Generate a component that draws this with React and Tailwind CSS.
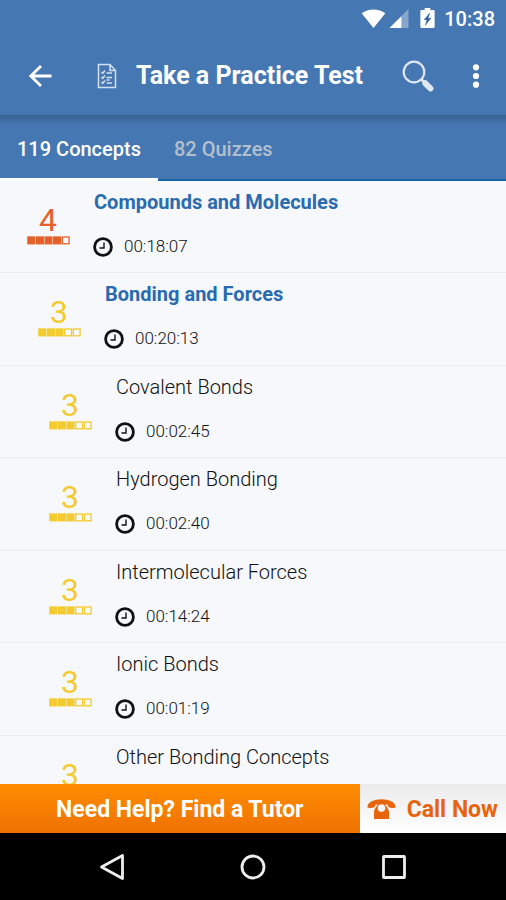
import React, { useState } from 'react';

const concepts = [
  { name: 'Compounds and Molecules', time: '00:18:07', score: 4, level: 0 },
  { name: 'Bonding and Forces', time: '00:20:13', score: 3, level: 1 },
  { name: 'Covalent Bonds', time: '00:02:45', score: 3, level: 2 },
  { name: 'Hydrogen Bonding', time: '00:02:40', score: 3, level: 2 },
  { name: 'Intermolecular Forces', time: '00:14:24', score: 3, level: 2 },
  { name: 'Ionic Bonds', time: '00:01:19', score: 3, level: 2 },
  { name: 'Other Bonding Concepts', score: 3, level: 2 },
];

const indents = ['pl-[26px]', 'pl-[37px]', 'pl-[48px]'];

const StatusBar = () => (
  <div className="flex h-9 items-center justify-end pr-[11px] text-white">
    <svg width="25" height="19" viewBox="0 0 26 20" fill="currentColor">
      <path d="M0.5 4.6C4 2 8.2 0.4 13 0.4s9 1.6 12.500 4.200L13 20z" />
    </svg>
    <svg className="ml-[3px]" width="20" height="19" viewBox="0 0 20 20" fill="currentColor">
      <path d="M20 0v20H0z" opacity="0.35" />
      <path d="M12.500 7.500V20H0z" />
    </svg>
    <svg className="ml-[11px]" width="15" height="20" viewBox="0 0 15 21">
      <path d="M4.500 0h6v2.200h3.300c.7 0 1.200.5 1.200 1.200v16.400c0 .7-.5 1.200-1.200 1.200H1.200C.5 21 0 20.500 0 19.800V3.400c0-.7.5-1.200 1.200-1.200h3.300z" fill="currentColor" />
      <path d="M9.800 5.500L4 12.300h3L5.300 18 11 10.800H8z" fill="#33639c" stroke="#33639c" strokeWidth="0.600" />
    </svg>
    <span className="ml-[9px] pt-0.5 text-xl font-medium">10:38</span>
  </div>
);

const Toolbar = () => (
  <div className="flex h-[79px] items-center pr-6 text-white">
    <button type="button" aria-label="Back" className="ml-7">
      <svg width="24" height="24" viewBox="0 0 24 24" fill="none" stroke="currentColor" strokeWidth="2.800">
        <path d="M23.500 12H3M13 2L2.800 12 13 22" />
      </svg>
    </button>
    <svg className="ml-[45px]" width="20" height="26" viewBox="0 0 20 26" fill="none" stroke="#d5e0ed" strokeWidth="1.500">
      <path d="M1.500 1.500h11.500l5.500 6V24.500h-17zM13 1.500v6h5.500" />
      <path d="M4.500 9l1.200 1.300L8 7.500M4.500 14l1.200 1.300L8 12.500M4.500 19l1.200 1.300L8 17.500M9.500 10h5.500M9.500 14.500h5.500M9.500 17h3M9.500 20h5.500" strokeWidth="1.500" />
    </svg>
    <h1 className="ml-[19px] flex-1 whitespace-nowrap text-[25px] font-bold">Take a Practice Test</h1>
    <button type="button" aria-label="Search">
      <svg width="32" height="32" viewBox="0 0 32 32" fill="none" stroke="#dfe8f3">
        <circle cx="12" cy="12" r="10.300" strokeWidth="2.200" />
        <path d="M19.500 19.500l3 3" strokeWidth="2.500" />
        <path d="M23.300 23.300l5.200 5.200" strokeWidth="6" strokeLinecap="round" />
      </svg>
    </button>
    <button type="button" aria-label="More options" className="ml-9">
      <svg width="12" height="24" viewBox="0 0 12 24" fill="currentColor">
        <circle cx="6" cy="3.300" r="3.100" />
        <circle cx="6" cy="12" r="3.100" />
        <circle cx="6" cy="20.700" r="3.100" />
      </svg>
    </button>
  </div>
);

const Score = ({ value }) => (
  <div className={`flex w-[44px] shrink-0 flex-col items-center ${value === 4 ? 'text-[#e4622a]' : 'text-[#f3cb2e]'}`}>
    <span className="text-[32px] leading-[31px]">{value}</span>
    <svg width="43" height="9" viewBox="0 0 43 9" stroke="currentColor" strokeWidth="1.300">
      {[0, 1, 2, 3, 4].map((i) => (
        <rect key={i} x={i * 8.6 + 0.9} y="1" width="6.800" height="6.800" fill={i < value ? 'currentColor' : 'none'} />
      ))}
    </svg>
  </div>
);

const ConceptRow = ({ name, time, score, level }) => (
  <li className={`flex h-[92px] shrink-0 border-b border-[#e9ecf1] even:h-[93px] ${indents[level]}`}>
    <div className="pt-6">
      <Score value={score} />
    </div>
    <div className="ml-6 pt-[9px]">
      <h2 className={`text-xl leading-6 ${level < 2 ? 'font-bold text-[#2a6bb0]' : 'font-light text-[#111111]'}`}>{name}</h2>
      {time && (
        <div className="mt-[21px] -ml-px flex h-6 items-center gap-[11px]">
          <svg width="20" height="20" viewBox="0 0 20 20" fill="none" stroke="#111111">
            <circle cx="10" cy="10" r="8.400" strokeWidth="2.800" />
            <path d="M11 5.500v5.500H6.500" strokeWidth="1.400" />
          </svg>
          <span className="text-[17px] font-light text-[#111111]">{time}</span>
        </div>
      )}
    </div>
  </li>
);

const App = () => {
  const [tab, setTab] = useState('concepts');

  return (
    <div className="flex h-screen flex-col overflow-hidden bg-[#f6f8fc] font-['Roboto',sans-serif]">
      <header className="shrink-0 bg-[#4577b2]">
        <StatusBar />
        <Toolbar />
      </header>
      <nav className="flex h-[66px] shrink-0 border-b-2 border-[#1663a6] bg-[#4577b2] bg-linear-to-b from-[#38618f] to-[#4577b2] to-15% text-xl font-medium">
        <button
          type="button"
          onClick={() => setTab('concepts')}
          className={`-mb-0.5 border-b-3 px-[17px] pt-1 ${tab === 'concepts' ? 'border-white text-white' : 'border-transparent text-[#b4bfce]'}`}
        >
          119 Concepts
        </button>
        <button
          type="button"
          onClick={() => setTab('quizzes')}
          className={`-mb-0.5 border-b-3 px-4 pt-1 ${tab === 'quizzes' ? 'border-white text-white' : 'border-transparent text-[#b4bfce]'}`}
        >
          82 Quizzes
        </button>
      </nav>
      <ul className="flex min-h-0 flex-1 flex-col overflow-y-auto [scrollbar-width:none]">
        {concepts.map((concept) => (
          <ConceptRow key={concept.name} {...concept} />
        ))}
      </ul>
      <div className="flex h-[49px] shrink-0 text-[23px] font-bold">
        <button type="button" className="flex-1 bg-linear-to-b from-[#ff8c00] to-[#ee7203] pt-1 text-white">
          Need Help? Find a Tutor
        </button>
        <button type="button" className="flex items-center gap-[11px] bg-linear-to-b from-[#ebebeb] to-white pr-2 pl-[7px] text-[#e8640c]">
          <svg width="29" height="20" viewBox="0 0 29 20" fill="currentColor">
            <path d="M0.300 8.500C0.500 3 7 0.300 14.500 0.300S28.500 3 28.700 8.500c-1.500.8-5.500.5-7-.3-.8-.5-.3-1.700-1.200-2.500-1.500-1-10.500-1-12 0-.9.8-.4 2-1.200 2.500-1.500.8-5.500 1.100-7 .3z" />
            <path fillRule="evenodd" d="M11 4h7c.2 3 4 5.500 4 9V20H7v-7c0-3.500 3.800-6 4-9zM14.500 5.300a3.800 3.800 0 1 0 0 7.600 3.800 3.800 0 0 0 0-7.600z" />
          </svg>
          <span className="pt-1">Call Now</span>
        </button>
      </div>
      <footer className="flex h-[67px] shrink-0 items-center justify-center gap-[115px] bg-black">
        <button type="button" aria-label="Navigate back">
          <svg width="26" height="28" viewBox="0 0 26 28" fill="none" stroke="#eeeeee" strokeWidth="2.800" strokeLinejoin="round">
            <path d="M23.500 2.500v23L2.500 14z" />
          </svg>
        </button>
        <button type="button" aria-label="Home">
          <svg width="26" height="26" viewBox="0 0 26 26" fill="none" stroke="#eeeeee" strokeWidth="2.800">
            <circle cx="13" cy="13" r="11" />
          </svg>
        </button>
        <button type="button" aria-label="Recent apps">
          <svg width="26" height="26" viewBox="0 0 26 26" fill="none" stroke="#eeeeee" strokeWidth="2.800" strokeLinejoin="round">
            <rect x="2.500" y="2.500" width="21" height="21" rx="0.500" />
          </svg>
        </button>
      </footer>
    </div>
  );
};

export default App;
